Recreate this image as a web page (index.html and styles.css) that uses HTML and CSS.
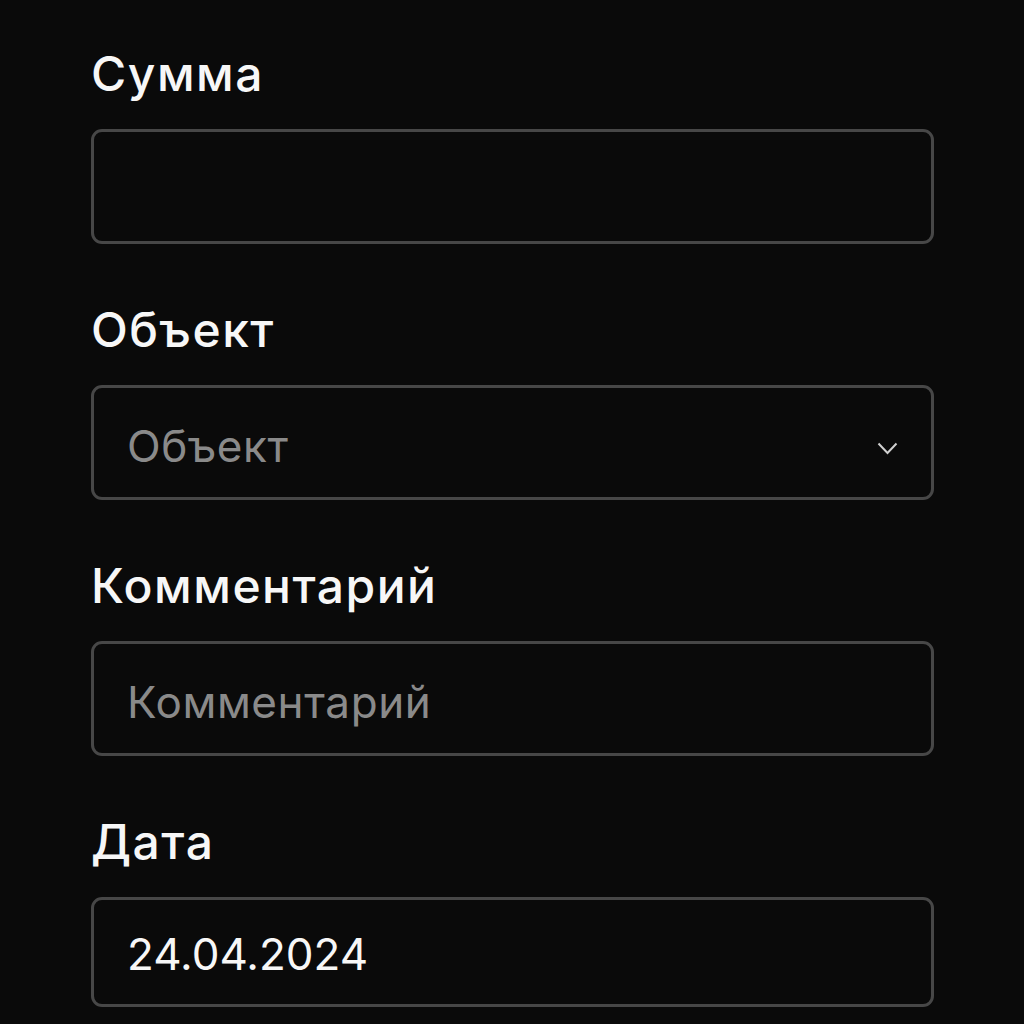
FILE: index.html
```html
<!DOCTYPE html>
<html lang="ru">
<head>
<meta charset="utf-8">
<link rel="stylesheet" href="styles.css">
</head>
<body>
<form class="form">
  <div class="field">
    <label class="label">Сумма</label>
    <div class="box"></div>
  </div>
  <div class="field">
    <label class="label">Объект</label>
    <div class="box select">
      <span class="placeholder">Объект</span>
      <svg class="chevron" width="21" height="13" viewBox="0 0 21 13"><path d="M1.5 1.5 L10.5 11 L19.5 1.5" fill="none" stroke="#d0d0d0" stroke-width="2"/></svg>
    </div>
  </div>
  <div class="field">
    <label class="label">Комментарий</label>
    <div class="box"><span class="placeholder">Комментарий</span></div>
  </div>
  <div class="field">
    <label class="label">Дата</label>
    <div class="box short"><span class="value">24.04.2024</span></div>
  </div>
</form>
</body>
</html>
```
FILE: styles.css
```css
html, body {
  margin: 0;
  padding: 0;
  background: #0a0a0a;
}
body {
  font-family: Inter, "Noto Sans", sans-serif;
  color: #f5f5f5;
}
.form {
  display: flex;
  flex-direction: column;
  gap: 58px;
  padding: 46px 90px 0 91px;
}
.field {
  display: flex;
  flex-direction: column;
  gap: 27px;
}
.label {
  font-size: 48px;
  line-height: 56px;
  font-weight: 500;
  letter-spacing: 1.5px;
  color: #f7f7f7;
}
.box {
  box-sizing: border-box;
  height: 115px;
  border: 3px solid #474747;
  border-radius: 11px;
  background: #0a0a0a;
  display: flex;
  align-items: center;
  padding: 6px 32px 0 33px;
}
.box.short {
  height: 110px;
  padding-top: 3px;
}
.placeholder {
  font-size: 44px;
  letter-spacing: 0.6px;
  color: #8a8a8a;
  flex: 1;
}
.value {
  font-size: 44px;
  color: #f7f7f7;
}
.chevron {
  margin-right: 1px;
  margin-top: 6px;
}
```
